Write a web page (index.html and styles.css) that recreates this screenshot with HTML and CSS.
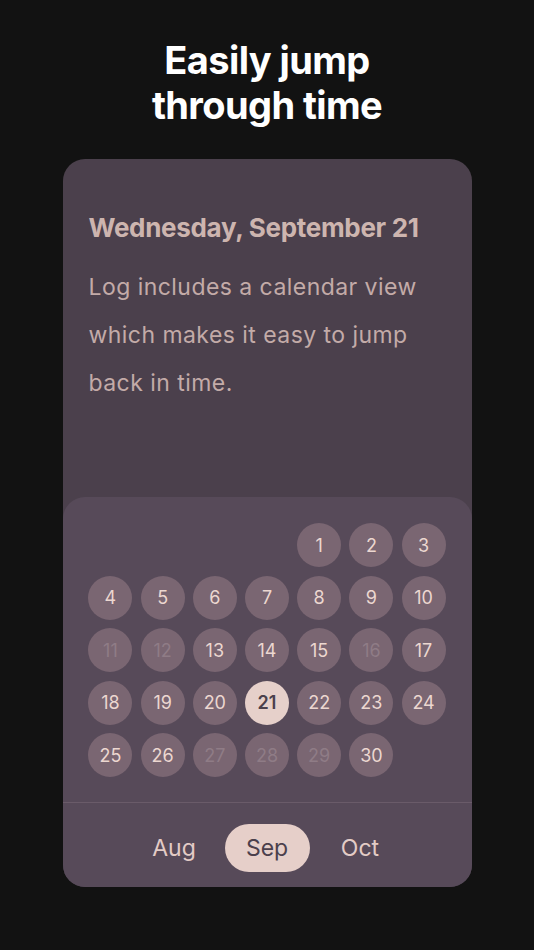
FILE: index.html
```html
<!DOCTYPE html>
<html lang="en">
<head>
    <meta charset="UTF-8">
    <meta name="viewport" content="width=device-width, initial-scale=1.0">
    <title>Log - Calendar</title>
    <link rel="stylesheet" href="styles.css">
</head>
<body>
    <h1 class="headline">Easily jump<br>through time</h1>
    <div class="card">
        <div class="card-body">
            <div class="date-title">Wednesday, September 21</div>
            <p class="description">Log includes a calendar view which makes it easy to jump back in time.</p>
        </div>
        <div class="calendar">
            <div class="days">
                <span class="day empty"></span>
                <span class="day empty"></span>
                <span class="day empty"></span>
                <span class="day empty"></span>
                <span class="day">1</span>
                <span class="day">2</span>
                <span class="day">3</span>
                <span class="day">4</span>
                <span class="day">5</span>
                <span class="day">6</span>
                <span class="day">7</span>
                <span class="day">8</span>
                <span class="day">9</span>
                <span class="day">10</span>
                <span class="day faded">11</span>
                <span class="day faded">12</span>
                <span class="day">13</span>
                <span class="day">14</span>
                <span class="day">15</span>
                <span class="day faded">16</span>
                <span class="day">17</span>
                <span class="day">18</span>
                <span class="day">19</span>
                <span class="day">20</span>
                <span class="day selected">21</span>
                <span class="day">22</span>
                <span class="day">23</span>
                <span class="day">24</span>
                <span class="day">25</span>
                <span class="day">26</span>
                <span class="day faded">27</span>
                <span class="day faded">28</span>
                <span class="day faded">29</span>
                <span class="day">30</span>
            </div>
            <div class="months">
                <button class="month">Aug</button>
                <button class="month active">Sep</button>
                <button class="month">Oct</button>
            </div>
        </div>
    </div>
</body>
</html>
```

FILE: styles.css
```css
* {
    margin: 0;
    padding: 0;
    box-sizing: border-box;
}
body {
    font-family: Inter, "Noto Sans", sans-serif;
    background: #121212;
    color: #ffffff;
    min-height: 100vh;
    padding-top: 38px;
}
.headline {
    text-align: center;
    font-size: 38px;
    line-height: 45px;
    font-weight: 700;
    letter-spacing: -0.6px;
    margin-bottom: 31px;
}
.card {
    width: 409px;
    margin: 0 auto;
    background: #4b404c;
    border-radius: 22px;
    overflow: hidden;
}
.card-body {
    padding: 53px 26px 0;
}
.date-title {
    font-size: 26px;
    line-height: 32px;
    font-weight: 700;
    letter-spacing: -0.3px;
    color: #cdb5af;
}
.description {
    margin-top: 19px;
    font-size: 23px;
    line-height: 48px;
    letter-spacing: 0.45px;
    color: #c3aba8;
}
.calendar {
    margin-top: 90px;
    background: #574a59;
    border-radius: 22px 22px 0 0;
}
.days {
    display: grid;
    grid-template-columns: repeat(7, 44px);
    column-gap: 8.2px;
    row-gap: 8.5px;
    justify-content: center;
    padding: 26px 0 25px;
    border-bottom: 1px solid #6a5b69;
}
.day {
    width: 44px;
    height: 44px;
    border-radius: 50%;
    background: #7a6672;
    color: #ecd7d0;
    font-size: 18px;
    display: flex;
    align-items: center;
    justify-content: center;
}
.day.empty {
    background: none;
}
.day.faded {
    color: #8f7c86;
}
.day.selected {
    background: #e6d0ca;
    color: #4b404c;
    font-weight: 600;
}
.months {
    display: flex;
    justify-content: center;
    gap: 8px;
    padding: 21px 0 15px;
}
.month {
    width: 85px;
    height: 48px;
    border: none;
    border-radius: 24px;
    background: none;
    font-family: inherit;
    font-size: 23px;
    color: #e3ccc6;
    cursor: pointer;
}
.month.active {
    background: #e6cfc9;
    color: #4b404c;
}
```
